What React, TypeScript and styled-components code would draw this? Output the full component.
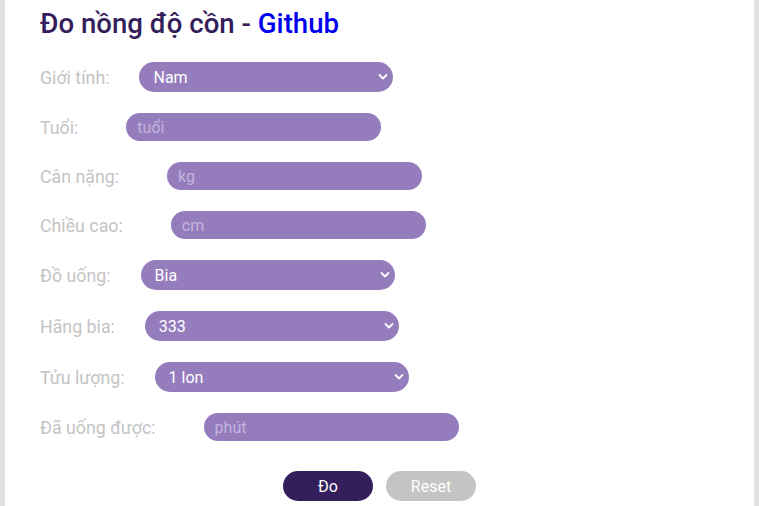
import React, { FC, useState } from "react";
import styled, { createGlobalStyle } from "styled-components";

const GlobalStyle = createGlobalStyle`
  html, body {
    margin: 0;
    padding: 0;
    background: #e0e0e0;
    font-family: Roboto, "Noto Sans", "Liberation Sans", sans-serif;
  }
`;

const Page = styled.div`
  margin: 0 5px;
  min-height: 506px;
  background: #ffffff;
  padding: 6px 0 0 35px;
  box-sizing: border-box;
`;

const Title = styled.h1`
  margin: 0 0 20px;
  font-size: 27.6px;
  font-weight: 500;
  line-height: 36px;
  color: #351e5c;
`;

const TitleLink = styled.a`
  color: #0000ee;
  text-decoration: none;
`;

const Form = styled.form`
  display: flex;
  flex-direction: column;
  gap: 21px;
`;

const Row = styled.div`
  display: flex;
  align-items: center;
`;

const Label = styled.label`
  font-size: 17.8px;
  line-height: 21px;
  color: #c4c4c4;
`;

const TextInput = styled.input`
  margin-left: 48px;
  width: 255px;
  height: 28px;
  box-sizing: border-box;
  border: none;
  outline: none;
  border-radius: 14px;
  background: #957dbd;
  padding: 0 11px;
  font-family: inherit;
  font-size: 16px;
  color: #ffffff;

  &::placeholder {
    color: #c3b4dc;
  }
`;

const SelectWrap = styled.div`
  position: relative;
  margin-left: 30px;
`;

const Select = styled.select`
  appearance: none;
  display: block;
  width: 254px;
  height: 30px;
  box-sizing: border-box;
  border: none;
  outline: none;
  border-radius: 15px;
  background: #957dbd;
  padding: 0 24px 0 14px;
  font-family: inherit;
  font-size: 16px;
  color: #ffffff;
`;

const Chevron = styled.svg`
  position: absolute;
  right: 5px;
  top: 11px;
  width: 10px;
  height: 8px;
  pointer-events: none;
`;

const Buttons = styled.div`
  display: flex;
  justify-content: center;
  gap: 13px;
  margin: 9px 0 0 -35px;
`;

const Button = styled.button<{ $primary?: boolean }>`
  width: 90px;
  height: 30px;
  border: none;
  border-radius: 15px;
  font-family: inherit;
  font-size: 16px;
  color: #ffffff;
  background: ${(p) => (p.$primary ? "#351e5c" : "#c4c4c4")};
  cursor: pointer;
`;

interface SelectProps {
  value: string;
  options: string[];
  onChange: (v: string) => void;
}

const PillSelect: FC<SelectProps> = ({ value, options, onChange }) => (
  <SelectWrap>
    <Select value={value} onChange={(e) => onChange(e.target.value)}>
      {options.map((o) => (
        <option key={o}>{o}</option>
      ))}
    </Select>
    <Chevron viewBox="0 0 10 8">
      <path d="M1.5 2 L5 5.5 L8.5 2" fill="none" stroke="#fff" strokeWidth="1.8" strokeLinecap="round" strokeLinejoin="round" />
    </Chevron>
  </SelectWrap>
);

const App: FC = () => {
  const [gender, setGender] = useState("Nam");
  const [drink, setDrink] = useState("Bia");
  const [brand, setBrand] = useState("333");
  const [amount, setAmount] = useState("1 lon");

  return (
    <>
      <GlobalStyle />
      <Page>
        <Title>
          Đo nồng độ cồn - <TitleLink href="#">Github</TitleLink>
        </Title>
        <Form onSubmit={(e) => e.preventDefault()}>
          <Row>
            <Label>Giới tính:</Label>
            <PillSelect value={gender} options={["Nam", "Nữ"]} onChange={setGender} />
          </Row>
          <Row>
            <Label>Tuổi:</Label>
            <TextInput placeholder="tuổi" />
          </Row>
          <Row>
            <Label>Cân nặng:</Label>
            <TextInput placeholder="kg" />
          </Row>
          <Row>
            <Label>Chiều cao:</Label>
            <TextInput placeholder="cm" />
          </Row>
          <Row>
            <Label>Đồ uống:</Label>
            <PillSelect value={drink} options={["Bia", "Rượu"]} onChange={setDrink} />
          </Row>
          <Row>
            <Label>Hãng bia:</Label>
            <PillSelect value={brand} options={["333", "Tiger", "Heineken"]} onChange={setBrand} />
          </Row>
          <Row>
            <Label>Tửu lượng:</Label>
            <PillSelect value={amount} options={["1 lon", "2 lon", "3 lon"]} onChange={setAmount} />
          </Row>
          <Row>
            <Label>Đã uống được:</Label>
            <TextInput placeholder="phút" />
          </Row>
          <Buttons>
            <Button $primary type="submit">Đo</Button>
            <Button type="reset">Reset</Button>
          </Buttons>
        </Form>
      </Page>
    </>
  );
};

export default App;
